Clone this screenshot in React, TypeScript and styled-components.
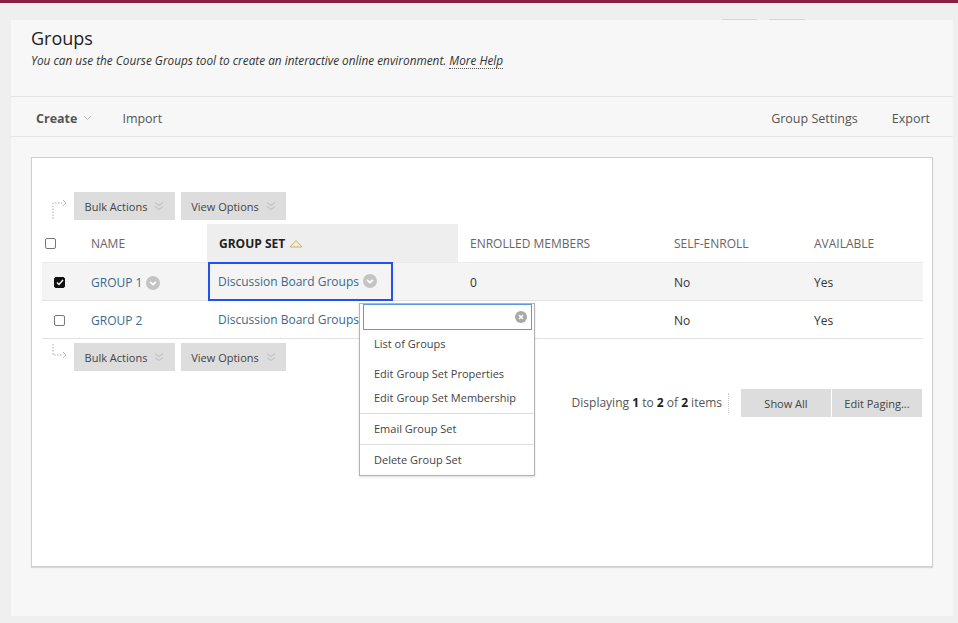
import styled, { createGlobalStyle } from "styled-components";

const GlobalStyle = createGlobalStyle`
  body {
    margin: 0;
    background: #efefef;
    font-family: "Open Sans", "Liberation Sans", sans-serif;
    color: #333;
  }
`;

const TopBar = styled.div`
  height: 3px;
  background: #8a1f43;
`;

const Page = styled.div`
  padding: 0 5px 6px 11px;
`;

const TabHints = styled.div`
  display: flex;
  justify-content: flex-end;
  gap: 12px;
  height: 17px;
  padding-right: 148px;
  align-items: flex-end;
`;

const TabHint = styled.span<{ $w: number }>`
  width: ${({ $w }) => $w}px;
  height: 1px;
  background: #d6d6d6;
`;

const Panel = styled.div`
  background: #f7f7f7;
`;

const Header = styled.div`
  height: 77px;
  box-sizing: border-box;
  padding: 6px 20px 0;
  border-bottom: 1px solid #e4e4e4;
`;

const Title = styled.h1`
  margin: 0;
  font-size: 18px;
  font-weight: 400;
  color: #222;
  line-height: 24px;
`;

const Subtitle = styled.p`
  margin: 2px 0 0;
  font-size: 11.8px;
  font-style: italic;
  color: #333;
`;

const HelpLink = styled.span`
  border-bottom: 1px dotted #555;
`;

const Toolbar = styled.div`
  height: 39px;
  box-sizing: border-box;
  display: flex;
  align-items: center;
  padding: 3px 23px 0 25px;
  border-bottom: 1px solid #e6e6e6;
  gap: 30px;
  height: 40px;
`;

const ToolItem = styled.span<{ $bold?: boolean }>`
  font-size: 12.5px;
  color: #555;
  font-weight: ${({ $bold }) => ($bold ? 700 : 400)};
  display: inline-flex;
  align-items: center;
  gap: 6px;
`;

const Spacer = styled.div`
  flex: 1;
`;

const Body = styled.div`
  padding: 20px 20px 49px;
`;

const Box = styled.div`
  position: relative;
  height: 410px;
  box-sizing: border-box;
  background: #fff;
  border: 1px solid #d0d0d0;
  box-shadow: 0 1px 1px #d8d8d8;
  padding: 0 10px;
`;

const ActionBar = styled.div<{ $top: number }>`
  display: flex;
  align-items: center;
  gap: 6px;
  margin-top: ${({ $top }) => $top}px;
  height: 28px;
`;

const Connector = styled.svg`
  width: 32px;
  height: 28px;
  flex: none;
  margin-right: -6px;
`;

const GreyButton = styled.button<{ $w: number }>`
  width: ${({ $w }) => $w}px;
  height: 28px;
  border: none;
  background: #dddddd;
  font-family: inherit;
  font-size: 11px;
  color: #444;
  display: inline-flex;
  align-items: center;
  justify-content: center;
  gap: 7px;
  padding: 0;
`;

const Grid = styled.div`
  display: grid;
  grid-template-columns: 37px 128px 251px 204px 140px 121px;
  margin-top: 4px;
`;

const HeadCell = styled.div<{ $active?: boolean; $pad?: number }>`
  height: 38px;
  display: flex;
  align-items: center;
  padding-left: ${({ $pad }) => $pad ?? 12}px;
  font-size: 12px;
  color: ${({ $active }) => ($active ? "#222" : "#666")};
  text-transform: uppercase;
  background: ${({ $active }) => ($active ? "#eeeeee" : "transparent")};
  font-weight: ${({ $active }) => ($active ? 700 : 400)};
  gap: 4px;
  border-bottom: 1px solid #eaeaea;
`;

const Cell = styled.div<{ $shade?: boolean; $pad?: number }>`
  height: 38px;
  box-sizing: border-box;
  padding-top: 2px;
  display: flex;
  align-items: center;
  padding-left: ${({ $pad }) => $pad ?? 12}px;
  font-size: 12px;
  color: #333;
  background: ${({ $shade }) => ($shade ? "#f4f4f4" : "#fff")};
  border-bottom: 1px solid #e2e2e2;
`;

const Check = styled.span<{ $on?: boolean }>`
  width: 11px;
  height: 11px;
  box-sizing: border-box;
  border-radius: 2px;
  border: 1px solid ${({ $on }) => ($on ? "#111" : "#777")};
  background: ${({ $on }) => ($on ? "#111" : "#fff")};
  display: inline-flex;
  align-items: center;
  justify-content: center;
`;

const LinkText = styled.span`
  color: #3a6a8c;
  display: inline-flex;
  align-items: center;
  gap: 4px;
  white-space: nowrap;
`;

const FocusRing = styled.span<{ $on?: boolean }>`
  display: inline-flex;
  align-items: center;
  height: 39px;
  margin-top: -3px;
  box-sizing: border-box;
  padding: 0 ${({ $on }) => ($on ? 14 : 8)}px 0 8px;
  border: 2px solid ${({ $on }) => ($on ? "#2251f2" : "transparent")};
`;

const Pager = styled.div`
  display: flex;
  justify-content: flex-end;
  align-items: center;
  margin-top: 18px;
  gap: 1px;
`;

const PagerText = styled.span`
  font-size: 12px;
  color: #555;
  padding-right: 6px;
  margin-right: 11px;
  border-right: 1px dotted #ccc;
  line-height: 20px;
  b {
    color: #222;
  }
`;

const Menu = styled.div`
  position: absolute;
  left: 327px;
  top: 145px;
  width: 176px;
  height: 173px;
  box-sizing: border-box;
  background: #fff;
  border: 1px solid #b4b4b4;
  box-shadow: 0 1px 2px rgba(0, 0, 0, 0.15);
`;

const SearchBox = styled.div`
  margin: 0 2px 0 3px;
  height: 26px;
  box-sizing: border-box;
  border: 1px solid #5a9ae0;
  display: flex;
  align-items: center;
  justify-content: flex-end;
  padding-right: 4px;
`;

const MenuItem = styled.div<{ $top: number }>`
  font-size: 11px;
  color: #444;
  padding: 0 14px;
  margin-top: ${({ $top }) => $top}px;
  line-height: 16px;
`;

const MenuRule = styled.div<{ $top: number }>`
  height: 1px;
  background: #dedede;
  margin-top: ${({ $top }) => $top}px;
`;

function Chevron() {
  return (
    <svg width="9" height="6" viewBox="0 0 9 6">
      <path d="M1 1l3.5 3.5L8 1" fill="none" stroke="#bbb" strokeWidth="1" />
    </svg>
  );
}

function DoubleChevron() {
  return (
    <svg width="10" height="10" viewBox="0 0 10 10">
      <path d="M1 1.5l4 3 4-3M1 5.5l4 3 4-3" fill="none" stroke="#c6c6c6" strokeWidth="1.2" />
    </svg>
  );
}

function CircleChevron() {
  return (
    <svg width="14" height="14" viewBox="0 0 14 14">
      <circle cx="7" cy="7" r="7" fill="#c4c4c4" />
      <path d="M4 5.8l3 2.8 3-2.8" fill="none" stroke="#fff" strokeWidth="1.8" />
    </svg>
  );
}

function SortUp() {
  return (
    <svg width="14" height="9" viewBox="0 0 14 9">
      <path d="M1 8L7 1.5 13 8z" fill="#f6ecc8" stroke="#c9b27a" strokeWidth="1" />
    </svg>
  );
}

function Tick() {
  return (
    <svg width="8" height="7" viewBox="0 0 8 7">
      <path d="M1 3.5l2 2L7 1" fill="none" stroke="#fff" strokeWidth="1.4" />
    </svg>
  );
}

function ClearIcon() {
  return (
    <svg width="12" height="12" viewBox="0 0 12 12">
      <circle cx="6" cy="6" r="6" fill="#a8a8a8" />
      <path d="M4 4l4 4M8 4l-4 4" stroke="#fff" strokeWidth="1.5" />
    </svg>
  );
}

function ArrowLink({ down }: { down?: boolean }) {
  return (
    <Connector viewBox="0 0 32 28">
      {down ? (
        <>
          <path d="M11 -5V12H20" fill="none" stroke="#aaa" strokeWidth="1" strokeDasharray="1.5 1.5" />
          <path d="M21 9l3 3-3 3" fill="none" stroke="#bbb" strokeWidth="1" />
        </>
      ) : (
        <>
          <path d="M11 30V11H20" fill="none" stroke="#aaa" strokeWidth="1" strokeDasharray="1.5 1.5" />
          <path d="M21 8l3 3-3 3" fill="none" stroke="#bbb" strokeWidth="1" />
        </>
      )}
    </Connector>
  );
}

function Actions({ top, down }: { top: number; down?: boolean }) {
  return (
    <ActionBar $top={top}>
      <ArrowLink down={down} />
      <GreyButton $w={101}>
        Bulk Actions <DoubleChevron />
      </GreyButton>
      <GreyButton $w={105}>
        View Options <DoubleChevron />
      </GreyButton>
    </ActionBar>
  );
}

const rows = [
  { name: "GROUP 1", set: "Discussion Board Groups", members: "0", self: "No", avail: "Yes", on: true },
  { name: "GROUP 2", set: "Discussion Board Groups", members: "", self: "No", avail: "Yes", on: false },
];

export default function App() {
  return (
    <>
      <GlobalStyle />
      <TopBar />
      <Page>
        <TabHints>
          <TabHint $w={35} />
          <TabHint $w={36} />
        </TabHints>
        <Panel>
          <Header>
            <Title>Groups</Title>
            <Subtitle>
              You can use the Course Groups tool to create an interactive online environment.{" "}
              <HelpLink>More Help</HelpLink>
            </Subtitle>
          </Header>
          <Toolbar>
            <ToolItem $bold>
              Create <Chevron />
            </ToolItem>
            <ToolItem>Import</ToolItem>
            <Spacer />
            <ToolItem>Group Settings</ToolItem>
            <ToolItem style={{ marginLeft: 4 }}>Export</ToolItem>
          </Toolbar>
          <Body>
            <Box>
              <Actions top={34} />
              <Grid>
                <HeadCell $pad={3}>
                  <Check />
                </HeadCell>
                <HeadCell>Name</HeadCell>
                <HeadCell $active>
                  Group Set <SortUp />
                </HeadCell>
                <HeadCell>Enrolled Members</HeadCell>
                <HeadCell>Self-Enroll</HeadCell>
                <HeadCell>Available</HeadCell>
                {rows.map((r) => (
                  <>
                    <Cell key={r.name + "c"} $shade={r.on} $pad={12}>
                      <Check $on={r.on}>{r.on && <Tick />}</Check>
                    </Cell>
                    <Cell $shade={r.on}>
                      <LinkText>
                        {r.name} {r.on && <CircleChevron />}
                      </LinkText>
                    </Cell>
                    <Cell $shade={r.on} $pad={1}>
                      <FocusRing $on={r.on}>
                        <LinkText>
                          {r.set} {r.on && <CircleChevron />}
                        </LinkText>
                      </FocusRing>
                    </Cell>
                    <Cell $shade={r.on}>{r.members}</Cell>
                    <Cell $shade={r.on}>{r.self}</Cell>
                    <Cell $shade={r.on}>{r.avail}</Cell>
                  </>
                ))}
              </Grid>
              <Actions top={4} down />
              <Pager>
                <PagerText>
                  Displaying <b>1</b> to <b>2</b> of <b>2</b> items
                </PagerText>
                <GreyButton $w={90}>Show All</GreyButton>
                <GreyButton $w={90}>Edit Paging...</GreyButton>
              </Pager>
              <Menu>
                <SearchBox>
                  <ClearIcon />
                </SearchBox>
                <MenuItem $top={6}>List of Groups</MenuItem>
                <MenuItem $top={14}>Edit Group Set Properties</MenuItem>
                <MenuItem $top={8}>Edit Group Set Membership</MenuItem>
                <MenuRule $top={7} />
                <MenuItem $top={7}>Email Group Set</MenuItem>
                <MenuRule $top={7} />
                <MenuItem $top={7}>Delete Group Set</MenuItem>
              </Menu>
            </Box>
          </Body>
        </Panel>
      </Page>
    </>
  );
}
